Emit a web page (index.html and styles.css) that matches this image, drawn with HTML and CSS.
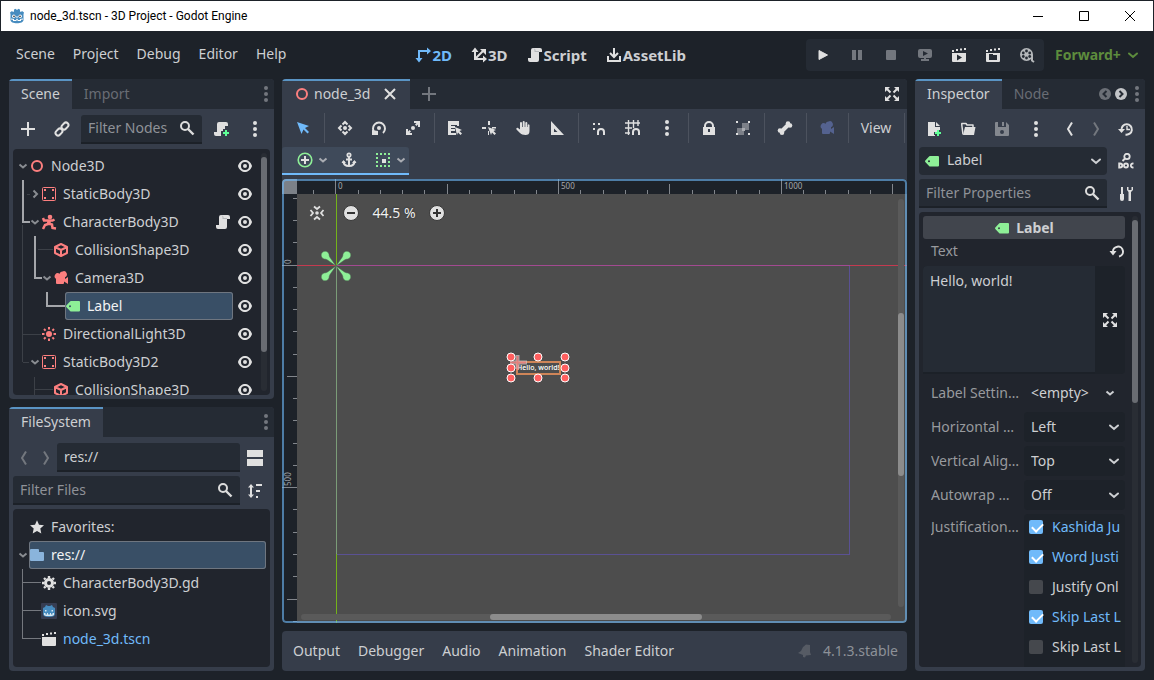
FILE: index.html
```
<!DOCTYPE html>
<html lang="en">
<head>
    <meta charset="UTF-8">
    <meta name="viewport" content="width=device-width, initial-scale=1.0">
    <title>node_3d.tscn - 3D Project - Godot Engine</title>
    <link rel="stylesheet" href="styles.css">
</head>
<body>

    <!-- Icon set, 16x16 each -->
    <svg class="icon-set" aria-hidden="true">
        <symbol id="godot" viewBox="0 0 16 16">
            <path fill="#478cbf" d="M1 4.500l2-1.500 1 1L5 3.500V1.500l2-.8.700 1.300h.6L9 .7l2 .8v2l1 .5 1-1 2 1.500-.5 1.800V12c0 2-3 3.300-6.500 3.300S1.500 14 1.500 12V6.300z"/>
            <circle cx="4.800" cy="8.200" r="1.700" fill="#fff"/><circle cx="11.200" cy="8.200" r="1.700" fill="#fff"/>
            <circle cx="5" cy="8.300" r=".9" fill="#414042"/><circle cx="11" cy="8.300" r=".9" fill="#414042"/>
            <path fill="#fff" d="M7.500 8h1v2.200h-1zM2 10.500l3 .5v1h2v-.7h2v.7h2v-1l3-.5v1l-2 .3v1.200H9v-.6H7v.6H4v-1.200l-2-.3z"/>
        </symbol>
        <symbol id="circle" viewBox="0 0 16 16"><circle cx="8" cy="8" r="5" fill="none" stroke="#fc7f7f" stroke-width="2"/></symbol>
        <symbol id="static-body" viewBox="0 0 16 16">
            <rect x="1.500" y="1.500" width="13" height="13" rx="1" fill="none" stroke="#fc7f7f"/>
            <path fill="#fc7f7f" d="M3 3h2v2H3zM11 3h2v2h-2zM3 11h2v2H3zM11 11h2v2h-2z"/>
        </symbol>
        <symbol id="character" viewBox="0 0 16 16">
            <circle cx="9" cy="3" r="2.300" fill="#fc7f7f"/>
            <path fill="none" stroke="#fc7f7f" stroke-width="2.500" d="M2 4l1 2.500h8.500l2-1M8 5.500L7 10l-3 1-2 4M7 9.500l4 1 .5 3.500 3.500.5M8.500 6v4"/>
        </symbol>
        <symbol id="cube" viewBox="0 0 16 16"><path fill="none" stroke="#fc7f7f" stroke-width="2" stroke-linejoin="round" d="M8 2l6 3v6l-6 3-6-3V5zM2 5l6 3 6-3M8 8v6"/></symbol>
        <symbol id="camera" viewBox="0 0 16 16"><path fill="currentColor" d="M9.500 1.500a3 3 0 0 0-2.900 2.200A3 3 0 1 0 3 8.800V13a1 1 0 0 0 1 1h6a1 1 0 0 0 1-1v-1.500l4 2.500V7l-3 2V7.200A3 3 0 0 0 9.500 1.500z"/></symbol>
        <symbol id="tag" viewBox="0 0 16 16"><path fill="#8eef97" fill-rule="evenodd" d="M6 3a1 1 0 0 0-.7.3l-4 4.200a1 1 0 0 0 0 1.400l4 4.300a1 1 0 0 0 .7.300h8a1 1 0 0 0 1-1V4a1 1 0 0 0-1-1zM5 7.300a1 1 0 0 1 0 2 1 1 0 0 1 0-2z"/></symbol>
        <symbol id="sun" viewBox="0 0 16 16">
            <circle cx="8" cy="8" r="3" fill="#fc7f7f"/>
            <path stroke="#fc7f7f" stroke-width="2" d="M8 1v2.500M8 12.500V15M1 8h2.500M12.500 8H15M3 3l1.600 1.600M11.400 11.400L13 13M13 3l-1.600 1.600M4.600 11.400L3 13"/>
        </symbol>
        <symbol id="eye" viewBox="0 0 16 16"><path fill="#e0e0e0" d="M8 2C5.440 2 2.210 3.950 1.050 7.700a1 1 0 0 0 0 .55C2.160 12.210 5.500 14 8 14s5.840-1.790 6.960-5.720a1 1 0 0 0 0-.55C13.860 3.940 10.560 2 8 2zm0 2a4 4 0 0 1 0 8 4 4 0 0 1 0-8zm0 2a2 2 0 0 0 0 4 2 2 0 0 0 0-4z"/></symbol>
        <symbol id="script" viewBox="0 0 16 16">
            <path fill="#e0e0e0" d="M6 1a2 2 0 0 0-2 2v8H1v2a2 2 0 0 0 2 2h7a2 2 0 0 0 2-2V5h3V3a2 2 0 0 0-2-2z"/>
            <path fill="#b4b6b9" d="M6 1.500a1.500 1.500 0 0 1 1.500 1.500v2H12V4H8.500V3c0-.8-1-1.500-2.500-1.500z"/>
        </symbol>
        <symbol id="script-add" viewBox="0 0 16 16">
            <path fill="#e0e0e0" d="M6 1a2 2 0 0 0-2 2v8H1v2a2 2 0 0 0 2 2h5v-5h2V8h2V5h3V3a2 2 0 0 0-2-2z"/>
            <path fill="#5fff97" d="M12 9h2v2h2v2h-2v2h-2v-2h-2v-2h2z"/>
        </symbol>
        <symbol id="plus" viewBox="0 0 16 16"><path fill="currentColor" d="M7 1h2v6h6v2H9v6H7V9H1V7h6z"/></symbol>
        <symbol id="link" viewBox="0 0 16 16"><g fill="none" stroke="#e0e0e0" stroke-width="2"><rect x="-3.800" y="-2.500" width="7.600" height="5" rx="2.500" transform="translate(11 5) rotate(-45)"/><rect x="-3.800" y="-2.500" width="7.600" height="5" rx="2.500" transform="translate(5 11) rotate(-45)"/></g></symbol>
        <symbol id="search" viewBox="0 0 16 16"><circle cx="6" cy="6" r="4" fill="none" stroke="#dcdcdc" stroke-width="2"/><path stroke="#dcdcdc" stroke-width="2.400" d="M9 9l5.500 5.500"/></symbol>
        <symbol id="dots" viewBox="0 0 16 16"><g fill="currentColor"><circle cx="8" cy="2" r="2"/><circle cx="8" cy="8" r="2"/><circle cx="8" cy="14" r="2"/></g></symbol>
        <symbol id="chevron" viewBox="0 0 16 16"><path fill="none" stroke="currentColor" stroke-width="2" stroke-linecap="round" d="M4 6.500l4 3.500 4-3.500"/></symbol>
        <symbol id="arrow-down" viewBox="0 0 16 16"><path fill="none" stroke="currentColor" stroke-width="2" d="M4.500 6.500L8 9.500l3.500-3"/></symbol>
        <symbol id="arrow-right" viewBox="0 0 16 16"><path fill="none" stroke="currentColor" stroke-width="2" d="M6.500 4.500L10 8l-3.500 3.500"/></symbol>
        <symbol id="back" viewBox="0 0 16 16"><path fill="none" stroke="currentColor" stroke-width="2" d="M10 1.500L6 8l4 6.500"/></symbol>
        <symbol id="forward" viewBox="0 0 16 16"><path fill="none" stroke="currentColor" stroke-width="2" d="M6 1.500l4 6.500-4 6.500"/></symbol>
        <symbol id="split" viewBox="0 0 16 16"><path fill="#e0e0e0" d="M0 0h16v7H0zM0 9h16v7H0z"/></symbol>
        <symbol id="sort" viewBox="0 0 16 16"><path fill="#e0e0e0" d="M4 1l3 3.500H5v7h2L4 15l-3-3.500h2v-7H1zM9 1h6v2H9zM9 7h4v2H9zM9 13h2v2H9z"/></symbol>
        <symbol id="star" viewBox="0 0 16 16"><path fill="#e0e0e0" d="M8 1.200l2 4.500 5 .5-3.700 3.300 1 5L8 12l-4.300 2.500 1-5L1 6.200l5-.5z"/></symbol>
        <symbol id="folder" viewBox="0 0 16 16"><path fill="#8ab4dc" d="M2 2a1 1 0 0 0-1 1v10a1 1 0 0 0 1 1h12a1 1 0 0 0 1-1V6a1 1 0 0 0-1-1h-4V3a1 1 0 0 0-1-1z"/></symbol>
        <symbol id="gear" viewBox="0 0 16 16"><circle cx="8" cy="8" r="3.500" fill="none" stroke="#e0e0e0" stroke-width="3"/><path stroke="#e0e0e0" stroke-width="2.400" d="M8 1v2M8 13v2M1 8h2M13 8h2M3 3l1.500 1.500M11.500 11.500L13 13M13 3l-1.500 1.500M4.500 11.500L3 13"/></symbol>
        <symbol id="godot-file" viewBox="0 0 16 16"><rect width="16" height="16" rx="1" fill="#363d52"/><path fill="#478cbf" d="M2 5l2-1 1-2 2 1h2l2-1 1 2 2 1v6c0 2-2 3-6 3s-6-1-6-3z"/><path fill="#d7e7f2" d="M4 7h1.500v1.500H4zM10.500 7H12v1.500h-1.500zM3 10h1.500v1.500H6V10h1v1.500h2V10h1v1.500h1.500V10H13v2l-2 1H5l-2-1z"/></symbol>
        <symbol id="clapper" viewBox="0 0 16 16"><path fill="#e0e0e0" d="M1 3h2v2H1zM5 2h2v2H5zM9 1.500h2v2H9zM13 1h2v2h-2zM1 6h14v8a1 1 0 0 1-1 1H2a1 1 0 0 1-1-1z"/></symbol>
        <symbol id="play-scene" viewBox="0 0 16 16"><path fill="#e0e0e0" fill-rule="evenodd" d="M1 3h2v2H1zM5 2h2v2H5zM9 1.500h2v2H9zM13 1h2v2h-2zM1 6h14v8a1 1 0 0 1-1 1H2a1 1 0 0 1-1-1zM6 7.500v6l5-3z"/></symbol>
        <symbol id="play-custom" viewBox="0 0 16 16"><path fill="#e0e0e0" fill-rule="evenodd" d="M1 3h2v2H1zM5 2h2v2H5zM9 1.500h2v2H9zM13 1h2v2h-2zM1 6h14v8a1 1 0 0 1-1 1H2a1 1 0 0 1-1-1zM4 7v6h8V8H8V7z"/></symbol>
        <symbol id="mode-2d" viewBox="0 0 16 16"><path fill="none" stroke="#70bafa" stroke-width="2" d="M4 13V4h9"/><path fill="#70bafa" d="M12 .5L16 4l-4 3.500zM.5 11L4 15.500 7.500 11z"/></symbol>
        <symbol id="mode-3d" viewBox="0 0 16 16"><path fill="none" stroke="#e0e0e0" stroke-width="2" d="M4 3v9h9M4 12l8-8"/><path fill="#e0e0e0" d="M.5 5L4 .5 7.500 5zM12 8.500l4 3.500-4 3.500zM9 2h6v6z"/></symbol>
        <symbol id="assetlib" viewBox="0 0 16 16"><path fill="none" stroke="#e0e0e0" stroke-width="2" d="M8 1v8M4 6l4 4 4-4M2 9v5h12V9"/></symbol>
        <symbol id="play" viewBox="0 0 16 16"><path fill="#e0e0e0" d="M4 3.500v9l8.500-4.500z" stroke="#e0e0e0" stroke-linejoin="round"/></symbol>
        <symbol id="pause" viewBox="0 0 16 16"><path fill="currentColor" d="M3 3h4v10H3zM9 3h4v10H9z"/></symbol>
        <symbol id="stop" viewBox="0 0 16 16"><rect x="3" y="3" width="10" height="10" rx="1" fill="currentColor"/></symbol>
        <symbol id="remote" viewBox="0 0 16 16"><path fill="currentColor" fill-rule="evenodd" d="M3 2a2 2 0 0 0-2 2v5a2 2 0 0 0 2 2h4v1H4v2h8v-2H9v-1h4a2 2 0 0 0 2-2V4a2 2 0 0 0-2-2zM6 4l5 2.500L6 9z"/></symbol>
        <symbol id="movie" viewBox="0 0 16 16"><circle cx="7.500" cy="7.500" r="6.500" fill="#b5b8bb"/><path stroke="#b5b8bb" stroke-width="2" d="M13 8v5.500l2 1.500"/><g fill="#252b34"><circle cx="7.500" cy="4" r="1.400"/><circle cx="7.500" cy="11" r="1.400"/><circle cx="4.300" cy="6" r="1.400"/><circle cx="10.700" cy="6" r="1.400"/><circle cx="4.300" cy="9.500" r="1.400"/><circle cx="10.700" cy="9.500" r="1.400"/></g></symbol>
        <symbol id="close" viewBox="0 0 16 16"><path stroke="#e0e0e0" stroke-width="2" d="M3 3l10 10M13 3L3 13"/></symbol>
        <symbol id="expand" viewBox="0 0 16 16"><path stroke="#e0e0e0" stroke-width="2" d="M3 3l3.500 3.500M13 3L9.500 6.500M3 13l3.500-3.500M13 13L9.500 9.500"/><path fill="#e0e0e0" d="M1 1h5L1 6zM15 1v5l-5-5zM1 15v-5l5 5zM15 15h-5l5-5z"/></symbol>
        <symbol id="cursor" viewBox="0 0 16 16"><path fill="#70bafa" d="M2 2l4.500 12 2-4.500 4 4 1.500-1.500-4-4L14 6z"/></symbol>
        <symbol id="move" viewBox="0 0 16 16"><circle cx="8" cy="8" r="2" fill="#e0e0e0"/><path fill="none" stroke="#e0e0e0" stroke-width="2" d="M5.500 4.500L8 2l2.500 2.500M5.500 11.500L8 14l2.500-2.500M4.500 5.500L2 8l2.500 2.500M11.500 5.500L14 8l-2.500 2.500"/></symbol>
        <symbol id="rotate" viewBox="0 0 16 16"><path fill="none" stroke="#e0e0e0" stroke-width="2" d="M4 13a6 6 0 1 1 8 0"/><circle cx="8" cy="8" r="2" fill="#e0e0e0"/><path fill="#e0e0e0" d="M1 10l6 1v4H1z"/></symbol>
        <symbol id="scale" viewBox="0 0 16 16"><circle cx="8" cy="8" r="2" fill="#e0e0e0"/><path fill="#e0e0e0" d="M9 1h6v6h-2V4.500L11.500 6 10 4.500 11.500 3H9zM7 15H1V9h2v2.500L4.500 10 6 11.500 4.500 13H7z"/></symbol>
        <symbol id="list-select" viewBox="0 0 16 16"><path fill="#e0e0e0" d="M1 1h11v5h-2V5H4v1h4v2H4v1h4v2H4v2h5v2H1zM8 7l7 3-2.500 1L15 13.500 13.500 15 11 12.500 10 15z"/></symbol>
        <symbol id="pivot" viewBox="0 0 16 16"><path fill="#e0e0e0" d="M7 1h2v4H7zM1 7h4v2H1zM11 7h4v1.500h-4zM7 11h1v4H7zM7 7l8 3-2.500 1L15 13.500 13.500 15 11 12.500 10 15z"/></symbol>
        <symbol id="hand" viewBox="0 0 16 16"><path fill="#e0e0e0" d="M5 3a1 1 0 0 1 2 0v4h.7V2a1 1 0 0 1 2 0v5h.6V3a1 1 0 0 1 2 0v4h.5V5a1 1 0 0 1 1.700 0v6c0 3-1.500 4-4 4S6 14 5 13L1.500 9.500C.8 8.500 2 7.500 3 8l2 1.500z"/></symbol>
        <symbol id="ruler" viewBox="0 0 16 16"><path fill="#e0e0e0" fill-rule="evenodd" d="M2 1l13 14H2zM5 8.500V12h3.500z"/></symbol>
        <symbol id="snap" viewBox="0 0 16 16"><path fill="none" stroke="#e0e0e0" stroke-width="2" d="M7 15v-3a3 3 0 0 1 6 0v3"/><path fill="#e0e0e0" d="M2 3h2v2H2zM7 3h2v2H7zM2 8h2v2H2z"/></symbol>
        <symbol id="grid-snap" viewBox="0 0 16 16"><path fill="none" stroke="#e0e0e0" stroke-width="1.400" d="M3.500 0v15M8.500 0v8M13 0v6M0 3h15M0 8h7M0 13h5"/><path fill="none" stroke="#e0e0e0" stroke-width="2" d="M8 15v-3a3 3 0 0 1 6 0v3"/></symbol>
        <symbol id="lock" viewBox="0 0 16 16"><path fill="none" stroke="#e0e0e0" stroke-width="2" d="M4 8V6a4 4 0 0 1 8 0v2"/><path fill="#e0e0e0" fill-rule="evenodd" d="M2 7h12v8H2zM7 9v3h2V9z"/></symbol>
        <symbol id="group" viewBox="0 0 16 16"><path fill="#7c8088" d="M7 3h7v7H9v5H2V8h5z"/><path fill="#a9abb0" d="M7 8h3v3H7z"/><path fill="#e0e0e0" d="M1 1h2v2H1zM13 1h2v2h-2zM1 13h2v2H1zM13 13h2v2h-2z"/></symbol>
        <symbol id="bone" viewBox="0 0 16 16"><path stroke="#e0e0e0" stroke-width="4" d="M4 12l8-8"/><g fill="#e0e0e0"><circle cx="11" cy="3.500" r="2.300"/><circle cx="13" cy="5.500" r="2.300"/><circle cx="3" cy="10.500" r="2.300"/><circle cx="5" cy="12.800" r="2.300"/></g></symbol>
        <symbol id="container-add" viewBox="0 0 16 16"><circle cx="8" cy="8" r="6.800" fill="none" stroke="#8eef97" stroke-width="1.600"/><path fill="#e0e0e0" d="M7 4h2v3h3v2H9v3H7V9H4V7h3z"/></symbol>
        <symbol id="anchor" viewBox="0 0 16 16"><path fill="none" stroke="#e0e0e0" stroke-width="2" d="M8 5v9M5 7.500h6M2.500 9c0 3 2 5 5.500 5s5.500-2 5.500-5"/><circle cx="8" cy="3" r="1.700" fill="none" stroke="#e0e0e0" stroke-width="1.700"/><path fill="#e0e0e0" d="M.5 11l2-3 2.500 3zM11 11l2.500-3 2 3z"/></symbol>
        <symbol id="layout" viewBox="0 0 16 16"><path fill="none" stroke="#8eef97" stroke-width="2" stroke-dasharray="2 2" d="M1 2h14M1 14h14M2 1v14M14 1v14"/><path fill="#e0e0e0" d="M7 7h4v4H7z"/></symbol>
        <symbol id="center-view" viewBox="0 0 16 16"><g fill="none" stroke="#e0e0e0" stroke-width="1.800"><path d="M5 1.500l3 2.500 3-2.500M5 14.500L8 12l3 2.500M1.500 5L4 8l-2.500 3M14.500 5L12 8l2.500 3"/></g><circle cx="8" cy="8" r="1.800" fill="#e0e0e0"/></symbol>
        <symbol id="zoom-less" viewBox="0 0 16 16"><circle cx="8" cy="8" r="7.500" fill="#e0e0e0" stroke="#383838"/><path fill="#333" d="M4 7h8v2H4z"/></symbol>
        <symbol id="zoom-more" viewBox="0 0 16 16"><circle cx="8" cy="8" r="7.500" fill="#e0e0e0" stroke="#383838"/><path fill="#333" d="M7 4h2v3h3v2H9v3H7V9H4V7h3z"/></symbol>
        <symbol id="bell" viewBox="0 0 16 16"><path fill="#565b64" d="M9 1.500l4 .5v7l1 3-5 .5-1 2-2-.5v-2L1 10l3-2 2-4z"/></symbol>
        <symbol id="prev-round" viewBox="0 0 16 16"><circle cx="8" cy="8" r="6" fill="#6b6f76"/><path fill="none" stroke="#252b34" stroke-width="2" d="M9.500 5l-3 3 3 3"/></symbol>
        <symbol id="next-round" viewBox="0 0 16 16"><circle cx="8" cy="8" r="6" fill="#c3c5c8"/><path fill="none" stroke="#252b34" stroke-width="2" d="M6.500 5l3 3-3 3"/></symbol>
        <symbol id="file-add" viewBox="0 0 16 16"><path fill="#e0e0e0" d="M2 1h7v5h5v3h-3v2H8v3h1v1H2zM10 1l4 4h-4z"/><path fill="#5fff97" d="M11 9h2v2h2v2h-2v2h-2v-2H9v-2h2z"/></symbol>
        <symbol id="open" viewBox="0 0 16 16"><path fill="none" stroke="#e0e0e0" stroke-width="1.500" stroke-linejoin="round" d="M3 13.500L1.800 4V2.500H6l1 1.500h6v2"/><path fill="#e0e0e0" d="M5 6h10.500L14 14H3z"/></symbol>
        <symbol id="save" viewBox="0 0 16 16"><path fill="#84888f" fill-rule="evenodd" d="M2 1h10l3 3v10a1 1 0 0 1-1 1H2a1 1 0 0 1-1-1V2a1 1 0 0 1 1-1zM4 1v5h8V1h-2v4H8V1zM8 9a2 2 0 0 0 0 4 2 2 0 0 0 0-4z"/></symbol>
        <symbol id="history" viewBox="0 0 16 16"><path fill="none" stroke="#e0e0e0" stroke-width="2" d="M3.500 9a5.200 5.200 0 1 1 4 4.500"/><path fill="none" stroke="#e0e0e0" stroke-width="1.400" d="M9 5v3.500h3"/><path fill="#e0e0e0" d="M0 8h7l-3.500 4z"/></symbol>
        <symbol id="undo" viewBox="0 0 16 16"><path fill="none" stroke="#e0e0e0" stroke-width="2" d="M4 9a5 5 0 1 1 6 4.500"/><path fill="#e0e0e0" d="M.5 8h7L4 12.500z"/></symbol>
        <symbol id="doc" viewBox="0 0 16 16"><circle cx="9" cy="3.500" r="2.700" fill="none" stroke="#e0e0e0" stroke-width="1.800"/><g fill="none" stroke="#e0e0e0" stroke-width="1.900"><path d="M7 5.500L4.500 8M1.200 10.500v4H2c3 0 3-4 0-4z"/><circle cx="8" cy="12.500" r="2"/><path d="M15.500 10.600c-3.500-.6-3.500 4.400 0 3.800"/></g></symbol>
        <symbol id="tools" viewBox="0 0 16 16"><path fill="#e0e0e0" d="M3 1h2v7h1v5a2 2 0 0 1-4 0V8h1zM9 1v3l1.500 2v9h2.500V6l2-2V1h-1.500v3h-3V1z"/></symbol>
    </svg>

    <header class="titlebar">
        <svg class="icon"><use href="#godot"/></svg>
        <h1>node_3d.tscn - 3D Project - Godot Engine</h1>
        <div class="window-controls">
            <button aria-label="Minimize"><svg viewBox="0 0 10 10"><path d="M0 5.500h10"/></svg></button>
            <button aria-label="Maximize"><svg viewBox="0 0 10 10"><path d="M.5.500h9v9h-9z"/></svg></button>
            <button aria-label="Close"><svg viewBox="0 0 10 10"><path d="M0 0l10 10M10 0L0 10"/></svg></button>
        </div>
    </header>

    <nav class="menubar">
        <div class="menus">
            <button>Scene</button>
            <button>Project</button>
            <button>Debug</button>
            <button>Editor</button>
            <button>Help</button>
        </div>
        <div class="modes">
            <button class="active"><svg class="icon"><use href="#mode-2d"/></svg>2D</button>
            <button><svg class="icon"><use href="#mode-3d"/></svg>3D</button>
            <button><svg class="icon"><use href="#script"/></svg>Script</button>
            <button><svg class="icon"><use href="#assetlib"/></svg>AssetLib</button>
        </div>
        <div class="run-bar">
            <button aria-label="Play"><svg class="icon"><use href="#play"/></svg></button>
            <button class="dim" aria-label="Pause"><svg class="icon"><use href="#pause"/></svg></button>
            <button class="dim" aria-label="Stop"><svg class="icon"><use href="#stop"/></svg></button>
            <button class="dim" aria-label="Remote debug"><svg class="icon"><use href="#remote"/></svg></button>
            <button aria-label="Play scene"><svg class="icon"><use href="#play-scene"/></svg></button>
            <button aria-label="Play custom scene"><svg class="icon"><use href="#play-custom"/></svg></button>
            <button aria-label="Movie maker"><svg class="icon"><use href="#movie"/></svg></button>
        </div>
        <div class="dropdown renderer">
            <select aria-label="Renderer"><option>Forward+</option></select>
            <svg class="icon caret"><use href="#chevron"/></svg>
        </div>
    </nav>

    <main class="docks">

        <!-- Left side: scene tree and files -->
        <div class="column left">
            <section class="dock scene-dock">
                <div class="tabs">
                    <button class="tab active">Scene</button>
                    <button class="tab">Import</button>
                    <button class="tab-menu" aria-label="Dock options"><svg class="icon"><use href="#dots"/></svg></button>
                </div>
                <div class="toolbar scene-toolbar">
                    <button aria-label="Add node"><svg class="icon"><use href="#plus"/></svg></button>
                    <button aria-label="Instance scene"><svg class="icon"><use href="#link"/></svg></button>
                    <div class="field">
                        <input type="text" placeholder="Filter Nodes" aria-label="Filter Nodes">
                        <svg class="icon"><use href="#search"/></svg>
                    </div>
                    <button aria-label="Attach script"><svg class="icon"><use href="#script-add"/></svg></button>
                    <button aria-label="More"><svg class="icon"><use href="#dots"/></svg></button>
                </div>
                <div class="tree scene-tree">
                    <svg class="guides" aria-hidden="true">
                        <path class="faint" d="M9.500 76v137M14 45.500h3M10 185.500h18M10 213.500h6M21.500 228v20M22 240.500h18M25 100.500h15"/>
                        <path class="strong" d="M10 31v42h7M22 87v42h7M34 143v14h18"/>
                    </svg>
                    <div class="row"><svg class="icon fold"><use href="#arrow-down"/></svg><svg class="icon"><use href="#circle"/></svg><span>Node3D</span><svg class="icon"><use href="#eye"/></svg></div>
                    <div class="row level-1"><svg class="icon fold"><use href="#arrow-right"/></svg><svg class="icon"><use href="#static-body"/></svg><span>StaticBody3D</span><svg class="icon"><use href="#eye"/></svg></div>
                    <div class="row level-1"><svg class="icon fold"><use href="#arrow-down"/></svg><svg class="icon"><use href="#character"/></svg><span>CharacterBody3D</span><svg class="icon"><use href="#script"/></svg><svg class="icon"><use href="#eye"/></svg></div>
                    <div class="row level-2"><i class="fold"></i><svg class="icon"><use href="#cube"/></svg><span>CollisionShape3D</span><svg class="icon"><use href="#eye"/></svg></div>
                    <div class="row level-2"><svg class="icon fold"><use href="#arrow-down"/></svg><svg class="icon red"><use href="#camera"/></svg><span>Camera3D</span><svg class="icon"><use href="#eye"/></svg></div>
                    <div class="row level-3"><i class="fold"></i><div class="selected"><svg class="icon"><use href="#tag"/></svg><span>Label</span></div><svg class="icon"><use href="#eye"/></svg></div>
                    <div class="row level-1"><i class="fold"></i><svg class="icon"><use href="#sun"/></svg><span>DirectionalLight3D</span><svg class="icon"><use href="#eye"/></svg></div>
                    <div class="row level-1"><svg class="icon fold"><use href="#arrow-down"/></svg><svg class="icon"><use href="#static-body"/></svg><span>StaticBody3D2</span><svg class="icon"><use href="#eye"/></svg></div>
                    <div class="row level-2"><i class="fold"></i><svg class="icon"><use href="#cube"/></svg><span>CollisionShape3D</span><svg class="icon"><use href="#eye"/></svg></div>
                    <div class="scroll"><i></i></div>
                </div>
            </section>

            <section class="dock file-dock">
                <div class="tabs">
                    <button class="tab active">FileSystem</button>
                    <button class="tab-menu" aria-label="Dock options"><svg class="icon"><use href="#dots"/></svg></button>
                </div>
                <div class="file-bar">
                    <button class="dim" aria-label="Previous folder"><svg class="icon"><use href="#back"/></svg></button>
                    <button class="dim" aria-label="Next folder"><svg class="icon"><use href="#forward"/></svg></button>
                    <div class="field"><input type="text" value="res://" aria-label="Path"></div>
                    <button class="side" aria-label="Split mode"><svg class="icon"><use href="#split"/></svg></button>
                </div>
                <div class="file-bar">
                    <div class="field">
                        <input type="text" placeholder="Filter Files" aria-label="Filter Files">
                        <svg class="icon"><use href="#search"/></svg>
                    </div>
                    <button class="side" aria-label="Sort files"><svg class="icon"><use href="#sort"/></svg></button>
                </div>
                <div class="tree file-tree">
                    <svg class="guides" aria-hidden="true"><path class="mid" d="M9.500 60v70M10 73.500h18M10 101.500h18M10 129.500h18"/></svg>
                    <div class="row"><i class="fold"></i><svg class="icon"><use href="#star"/></svg><span>Favorites:</span></div>
                    <div class="row"><svg class="icon fold"><use href="#arrow-down"/></svg><div class="selected"><svg class="icon"><use href="#folder"/></svg><span>res://</span></div></div>
                    <div class="row level-1"><i class="fold"></i><svg class="icon"><use href="#gear"/></svg><span>CharacterBody3D.gd</span></div>
                    <div class="row level-1"><i class="fold"></i><svg class="icon"><use href="#godot-file"/></svg><span>icon.svg</span></div>
                    <div class="row level-1"><i class="fold"></i><svg class="icon"><use href="#clapper"/></svg><span class="accent">node_3d.tscn</span></div>
                </div>
            </section>
        </div>

        <!-- 2D editor -->
        <div class="column center">
            <section class="dock workspace">
                <div class="tabs">
                    <button class="tab active scene-tab"><svg class="icon"><use href="#circle"/></svg>node_3d<svg class="icon"><use href="#close"/></svg></button>
                    <button class="new-tab" aria-label="New scene"><svg class="icon"><use href="#plus"/></svg></button>
                    <button class="tab-menu wide" aria-label="Distraction free mode"><svg class="icon"><use href="#expand"/></svg></button>
                </div>
                <div class="toolbar canvas-toolbar">
                    <button aria-label="Select"><svg class="icon"><use href="#cursor"/></svg></button>
                    <i class="sep"></i>
                    <button aria-label="Move"><svg class="icon"><use href="#move"/></svg></button>
                    <button aria-label="Rotate"><svg class="icon"><use href="#rotate"/></svg></button>
                    <button aria-label="Scale"><svg class="icon"><use href="#scale"/></svg></button>
                    <i class="sep"></i>
                    <button aria-label="List select"><svg class="icon"><use href="#list-select"/></svg></button>
                    <button aria-label="Pivot"><svg class="icon"><use href="#pivot"/></svg></button>
                    <button aria-label="Pan"><svg class="icon"><use href="#hand"/></svg></button>
                    <button aria-label="Ruler"><svg class="icon"><use href="#ruler"/></svg></button>
                    <i class="sep"></i>
                    <button aria-label="Smart snap"><svg class="icon"><use href="#snap"/></svg></button>
                    <button aria-label="Grid snap"><svg class="icon"><use href="#grid-snap"/></svg></button>
                    <button aria-label="Snap options"><svg class="icon"><use href="#dots"/></svg></button>
                    <i class="sep"></i>
                    <button aria-label="Lock"><svg class="icon"><use href="#lock"/></svg></button>
                    <button aria-label="Group"><svg class="icon"><use href="#group"/></svg></button>
                    <i class="sep"></i>
                    <button aria-label="Skeleton"><svg class="icon"><use href="#bone"/></svg></button>
                    <i class="sep"></i>
                    <button class="override" aria-label="Override camera"><svg class="icon"><use href="#camera"/></svg></button>
                    <i class="sep"></i>
                    <button class="view">View</button>
                    <i class="sep"></i>
                </div>
                <div class="context-bar">
                    <button aria-label="Container sizing"><svg class="icon"><use href="#container-add"/></svg><svg class="icon"><use href="#arrow-down"/></svg></button>
                    <button aria-label="Anchor mode"><svg class="icon"><use href="#anchor"/></svg></button>
                    <button aria-label="Anchor presets"><svg class="icon"><use href="#layout"/></svg><svg class="icon"><use href="#arrow-down"/></svg></button>
                </div>
                <div class="viewport">
                    <svg class="canvas">
                        <rect class="frame" x="54.500" y="86.500" width="513" height="289"/>
                        <path class="axis-y" d="M54.500 15v800"/>
                        <path class="axis-y inside" d="M54.500 87v288"/>
                        <path class="axis-x" d="M15 86.500h1600"/>
                        <path class="axis-x inside" d="M55 86.500h513"/>

                        <!-- Anchor handles -->
                        <g class="anchors" transform="translate(54 87)">
                            <path id="pin" d="M0 0L-6-8.500Q-7-10-7-12A4 4 0 1 0-12-7Q-10-7-8.500-6z"/>
                            <use href="#pin" transform="rotate(90)"/>
                            <use href="#pin" transform="rotate(180)"/>
                            <use href="#pin" transform="rotate(270)"/>
                        </g>

                        <!-- Selected label -->
                        <rect class="selection" x="235" y="183" width="43" height="12"/>
                        <text class="label-text" x="235" y="191">Hello, world!</text>
                        <path class="cross" d="M228 183.500h17M235.500 176v14"/>
                        <path class="cross inner" d="M228 183.500h16M235.500 177v14"/>
                        <g class="handles">
                            <circle cx="229" cy="178" r="4"/><circle cx="256" cy="178" r="4"/><circle cx="283" cy="178" r="4"/>
                            <circle cx="229" cy="189" r="4"/><circle cx="283" cy="189" r="4"/>
                            <circle cx="229" cy="199" r="4"/><circle cx="256" cy="199" r="4"/><circle cx="283" cy="199" r="4"/>
                        </g>

                        <!-- Rulers -->
                        <rect class="ruler" width="100%" height="15"/>
                        <rect class="ruler" width="15" height="100%"/>
                        <path class="ticks" d="M31.500 11v4M76.500 11v4M98.500 11v4M120.500 11v4M142.500 11v4M187.500 11v4M209.500 11v4M232.500 11v4M254.500 11v4M298.500 11v4M321.500 11v4M343.500 11v4M365.500 11v4M410.500 11v4M432.500 11v4M454.500 11v4M477.500 11v4M521.500 11v4M543.500 11v4M566.500 11v4M588.500 11v4M165.500 5v10M387.500 5v10M610.500 5v10M53.500 0v15M276.500 0v15M499.500 0v15"/>
                        <path class="ticks" d="M11 19.500h4M11 41.500h4M11 63.500h4M11 108.500h4M11 130.500h4M11 152.500h4M11 175.500h4M11 219.500h4M11 241.500h4M11 264.500h4M11 286.500h4M11 330.500h4M11 353.500h4M11 375.500h4M11 397.500h4M11 442.500h4M5 197.500h10M5 420.500h10M0 86.500h15M0 308.500h15"/>
                        <rect class="corner" width="15" height="15"/>
                        <g class="numbers">
                            <text x="56" y="10">0</text><text x="279" y="10">500</text><text x="502" y="10">1000</text>
                            <text transform="translate(9 85) rotate(-90)">0</text>
                            <text transform="translate(9 307) rotate(-90)">500</text>
                        </g>
                    </svg>
                    <div class="zoom">
                        <button aria-label="Center view"><svg class="icon"><use href="#center-view"/></svg></button>
                        <button aria-label="Zoom out"><svg class="icon"><use href="#zoom-less"/></svg></button>
                        <button class="zoom-value">44.5 %</button>
                        <button aria-label="Zoom in"><svg class="icon"><use href="#zoom-more"/></svg></button>
                    </div>
                    <div class="v-scroll"><i></i></div>
                    <div class="h-scroll"><i></i></div>
                </div>
            </section>

            <footer class="bottom-panel">
                <button>Output</button>
                <button>Debugger</button>
                <button>Audio</button>
                <button>Animation</button>
                <button>Shader Editor</button>
                <div class="version"><svg class="icon"><use href="#bell"/></svg><span>4.1.3.stable</span></div>
            </footer>
        </div>

        <!-- Inspector -->
        <div class="column right">
            <section class="dock inspector">
                <div class="tabs">
                    <button class="tab active">Inspector</button>
                    <button class="tab">Node</button>
                    <div class="tab-nav">
                        <button aria-label="Previous tab"><svg class="icon"><use href="#prev-round"/></svg></button>
                        <button aria-label="Next tab"><svg class="icon"><use href="#next-round"/></svg></button>
                        <button aria-label="Dock options"><svg class="icon"><use href="#dots"/></svg></button>
                    </div>
                </div>
                <div class="toolbar inspector-toolbar">
                    <button aria-label="New resource"><svg class="icon"><use href="#file-add"/></svg></button>
                    <button aria-label="Load resource"><svg class="icon"><use href="#open"/></svg></button>
                    <button aria-label="Save resource"><svg class="icon"><use href="#save"/></svg></button>
                    <button aria-label="Resource options"><svg class="icon"><use href="#dots"/></svg></button>
                    <button aria-label="Back"><svg class="icon"><use href="#back"/></svg></button>
                    <button class="dim narrow" aria-label="Forward"><svg class="icon"><use href="#forward"/></svg></button>
                    <button aria-label="History"><svg class="icon"><use href="#history"/></svg></button>
                </div>
                <div class="inspector-bar">
                    <div class="dropdown object">
                        <svg class="icon kind"><use href="#tag"/></svg>
                        <select aria-label="Edited object"><option>Label</option></select>
                        <svg class="icon caret"><use href="#chevron"/></svg>
                    </div>
                    <button aria-label="Open documentation"><svg class="icon"><use href="#doc"/></svg></button>
                </div>
                <div class="inspector-bar">
                    <div class="field">
                        <input type="text" placeholder="Filter Properties" aria-label="Filter Properties">
                        <svg class="icon"><use href="#search"/></svg>
                    </div>
                    <button aria-label="Property tools"><svg class="icon"><use href="#tools"/></svg></button>
                </div>
                <div class="properties">
                    <h2><svg class="icon"><use href="#tag"/></svg>Label</h2>
                    <div class="text-head">
                        <label for="text">Text</label>
                        <button aria-label="Revert"><svg class="icon"><use href="#undo"/></svg></button>
                    </div>
                    <div class="text-edit">
                        <textarea id="text">Hello, world!</textarea>
                        <button aria-label="Expand editor"><svg class="icon"><use href="#expand"/></svg></button>
                    </div>
                    <div class="prop plain">
                        <label for="settings">Label Settings</label>
                        <div class="dropdown"><select id="settings"><option>&lt;empty&gt;</option></select><svg class="icon caret"><use href="#arrow-down"/></svg></div>
                    </div>
                    <div class="prop">
                        <label for="horizontal">Horizontal Alignment</label>
                        <div class="dropdown"><select id="horizontal"><option>Left</option></select><svg class="icon caret"><use href="#chevron"/></svg></div>
                    </div>
                    <div class="prop">
                        <label for="vertical">Vertical Alignment</label>
                        <div class="dropdown"><select id="vertical"><option>Top</option></select><svg class="icon caret"><use href="#chevron"/></svg></div>
                    </div>
                    <div class="prop">
                        <label for="autowrap">Autowrap Mode</label>
                        <div class="dropdown"><select id="autowrap"><option>Off</option></select><svg class="icon caret"><use href="#chevron"/></svg></div>
                    </div>
                    <div class="prop flags">
                        <span class="prop-name">Justification Flags</span>
                        <div class="checks">
                            <label><input type="checkbox" checked><span>Kashida Ju</span></label>
                            <label><input type="checkbox" checked><span>Word Justi</span></label>
                            <label><input type="checkbox"><span>Justify Onl</span></label>
                            <label><input type="checkbox" checked><span>Skip Last L</span></label>
                            <label><input type="checkbox"><span>Skip Last L</span></label>
                        </div>
                    </div>
                    <div class="scroll"><i></i></div>
                </div>
            </section>
        </div>
    </main>

</body>
</html>
```
FILE: styles.css
```
* {
    box-sizing: border-box;
}

body {
    margin: 0;
    height: 100vh;
    display: flex;
    flex-direction: column;
    overflow: hidden;
    padding: 1px;
    background-color: #1d2229;
    color: #cdcfd2;
    font-family: "Noto Sans", sans-serif;
    font-size: 14px;
    line-height: 20px;
}

button, input, select, textarea {
    font: inherit;
    color: inherit;
    background: none;
    border: none;
    border-radius: 0;
    padding: 0;
    margin: 0;
    outline: none;
    appearance: none;
}

button {
    display: flex;
    align-items: center;
    justify-content: center;
    flex-shrink: 0;
    white-space: nowrap;
}

.icon-set {
    display: none;
}

.icon {
    width: 16px;
    height: 16px;
    flex-shrink: 0;
}

/* Window title */
.titlebar {
    display: flex;
    align-items: center;
    height: 30px;
    flex-shrink: 0;
    padding-left: 8px;
    background-color: #fff;
    color: #000;
}

.titlebar h1 {
    margin: 0 auto 0 5px;
    font-family: Roboto, sans-serif;
    font-size: 12px;
    font-weight: 400;
}

.window-controls {
    display: flex;
}

.window-controls button {
    width: 46px;
    height: 30px;
}

.window-controls svg {
    width: 10px;
    height: 10px;
    fill: none;
    stroke: #000;
}

/* Main menu */
.menubar {
    display: flex;
    align-items: center;
    height: 48px;
    flex-shrink: 0;
    padding: 0 9px 0 6px;
}

.menus {
    display: flex;
}

.menus button {
    padding: 0 9px 2px;
}

.modes {
    display: flex;
    gap: 19px;
    margin: 0 auto;
    font-size: 15px;
    font-weight: 700;
}

.modes button {
    gap: 1px;
}

.modes .active {
    color: #70bafa;
}

.run-bar {
    display: flex;
    height: 32px;
    border-radius: 4px;
    background-color: #252b34;
}

.run-bar button {
    width: 34px;
}

.dim {
    color: #73777e;
}

.dropdown {
    position: relative;
    display: flex;
}

.dropdown select {
    width: 100%;
    min-width: 0;
}

.caret {
    position: absolute;
    right: 3px;
    top: 50%;
    margin-top: -8px;
    pointer-events: none;
}

.renderer {
    width: 100px;
    padding-left: 11px;
    color: #5d8c3d;
    font-weight: 700;
}

/* Docks */
.docks {
    flex: 1;
    min-height: 0;
    display: flex;
    gap: 8px;
    padding: 0 8px 8px;
}

.column {
    display: flex;
    flex-direction: column;
    gap: 8px;
    min-width: 0;
}

.left {
    width: 265px;
}

.center {
    flex: 1;
}

.right {
    width: 230px;
}

.dock {
    display: flex;
    flex-direction: column;
    min-height: 0;
    border-radius: 4px;
    background-color: #363d4a;
    overflow: hidden;
}

.scene-dock {
    flex: 320;
}

.file-dock {
    flex: 264;
}

.tabs {
    display: flex;
    height: 30px;
    flex-shrink: 0;
    background-color: #252b34;
}

.tab {
    padding: 0 12px;
    color: #696d74;
}

.tab.active {
    border-top: 2px solid #5a94c4;
    padding-bottom: 2px;
    background-color: #363d4a;
    color: #cdcfd2;
}

.tab-menu {
    width: 16px;
    margin-left: auto;
    color: #73777e;
}

.tab-menu.wide {
    width: 30px;
}

.scene-tab {
    gap: 4px;
}

.scene-tab .icon:last-child {
    margin-left: 8px;
}

.new-tab {
    width: 38px;
    color: #73777e;
}

.tab-nav {
    display: flex;
    margin-left: auto;
    color: #73777e;
}

.toolbar {
    display: flex;
    align-items: center;
    height: 40px;
    flex-shrink: 0;
    color: #e0e0e0;
}

.toolbar button {
    width: 34px;
    height: 28px;
}

.field {
    display: flex;
    align-items: center;
    flex: 1;
    min-width: 0;
    height: 29px;
    padding: 0 7px;
    border-bottom: 2px solid #1c2128;
    border-radius: 3px 3px 0 0;
    background-color: #252b34;
}

.field input {
    flex: 1;
    min-width: 0;
    width: 0;
}

.field input::placeholder {
    color: #8f9298;
    opacity: 1;
}

.scene-toolbar {
    padding: 0 2px;
}

.scene-toolbar .field {
    margin: 0 2px;
}

/* Trees */
.tree {
    position: relative;
    flex: 1;
    min-height: 0;
    margin: 0 4px 4px;
    border-radius: 4px;
    background-color: #21252d;
    overflow: hidden;
}

.scene-tree {
    padding: 3px 17px 0 0;
}

.file-tree {
    padding: 4px 4px 0 0;
}

.guides {
    position: absolute;
    left: 0;
    top: 0;
    width: 100%;
    height: 100%;
    fill: none;
}

.guides .faint {
    stroke: #3c4047;
}

.guides .mid {
    stroke: #75787e;
}

.guides .strong {
    stroke: #a4a6aa;
    stroke-width: 2px;
}

.row {
    position: relative;
    display: flex;
    align-items: center;
    gap: 6px;
    height: 28px;
    padding-left: 2px;
}

.row span {
    flex: 1;
    white-space: nowrap;
}

.level-1 {
    padding-left: 14px;
}

.level-2 {
    padding-left: 26px;
}

.level-3 {
    padding-left: 38px;
}

.level-3 .selected {
    margin-right: -2px;
}

.fold {
    width: 16px;
    flex-shrink: 0;
    margin-right: -8px;
    color: #898c91;
}

.red {
    color: #fc7f7f;
}

.selected {
    display: flex;
    align-items: center;
    gap: 6px;
    flex: 1;
    height: 28px;
    border-radius: 3px;
    background-color: #394f66;
    box-shadow: inset 0 0 0 1px #6f7680;
    color: #f2f3f4;
}

.accent {
    color: #70bafa;
}

.scroll {
    position: absolute;
    right: 3px;
    top: 4px;
    bottom: 4px;
    width: 6px;
    border-radius: 3px;
    background-color: #292d34;
}

.scroll i {
    display: block;
    margin-top: 4px;
    height: 82%;
    border-radius: 3px;
    background-color: #696c72;
}

/* File system */
.file-bar {
    display: flex;
    align-items: center;
    margin: 0 4px 4px;
}

.tabs + .file-bar {
    margin-top: 6px;
}

.file-bar .dim {
    width: 22px;
}

.side {
    width: 30px;
    height: 28px;
}

/* 2D editor */
.workspace {
    flex: 1;
}

.canvas-toolbar {
    height: 38px;
    padding-left: 4px;
}

.sep {
    width: 1px;
    height: 30px;
    flex-shrink: 0;
    margin: 0 3px 0 4px;
    background-color: #4c525e;
}

.canvas-toolbar .view {
    width: 48px;
    color: #cdcfd2;
}

.canvas-toolbar .override {
    color: #54628f;
}

.context-bar {
    display: flex;
    align-self: flex-start;
    flex-shrink: 0;
    height: 28px;
    margin-bottom: 4px;
    padding: 0 0 0 10px;
    border-bottom: 2px solid #70bafa;
    border-radius: 3px 3px 0 0;
    background-color: #3f4a5a;
    color: #a9acb2;
}

.context-bar button {
    gap: 2px;
    padding: 0 5px;
}

.context-bar button:last-child {
    padding: 0 0 0 13px;
}

.viewport {
    position: relative;
    flex: 1;
    min-height: 0;
    border-radius: 4px;
    background-color: #4d4d4d;
    overflow: hidden;
}

.viewport::after {
    content: "";
    position: absolute;
    inset: 0;
    border: 2px solid #70bafa99;
    border-radius: 4px;
    pointer-events: none;
}

.canvas {
    position: absolute;
    width: 100%;
    height: 100%;
    fill: none;
}

.frame {
    stroke: #5a5193;
}

.axis-x {
    stroke: #c43a50;
}

.axis-x.inside {
    stroke: #a34a91;
}

.axis-y {
    stroke: #74b31a;
}

.axis-y.inside {
    stroke: #7b9c78;
}

.anchors {
    fill: #8eef97;
    stroke: #4c6350;
    stroke-width: 1px;
    stroke-opacity: 0.5;
}

.selection {
    stroke: #cf8558;
    stroke-width: 2px;
}

.label-text {
    fill: #fff;
    font-family: "Open Sans", sans-serif;
    font-size: 7px;
    font-weight: 600;
}

.cross {
    stroke: #d0cccc;
    stroke-width: 4px;
    stroke-opacity: 0.7;
}

.cross.inner {
    stroke: #f06a6a;
    stroke-width: 2px;
}

.handles {
    fill: #ff5f5f;
    stroke: #fff;
}

.ruler {
    fill: #1d2229;
}

.ticks {
    stroke: #82868c;
}

.corner {
    fill: #7c8188;
}

.numbers {
    fill: #a6a9ad;
    font-size: 8px;
}

.zoom {
    position: absolute;
    left: 18px;
    top: 20px;
    display: flex;
    color: #f0f0f0;
}

.zoom button {
    width: 34px;
    height: 28px;
}

.zoom .zoom-value {
    width: 52px;
    text-shadow: 0 0 2px #222;
}

.v-scroll {
    position: absolute;
    top: 20px;
    bottom: 16px;
    right: 3px;
    width: 6px;
    border-radius: 3px;
    background-color: #5a5a5a;
}

.v-scroll i {
    position: absolute;
    top: 28%;
    width: 6px;
    height: 40%;
    border-radius: 3px;
    background-color: #8c8c8c;
}

.h-scroll {
    position: absolute;
    left: 19px;
    right: 16px;
    bottom: 3px;
    height: 6px;
    border-radius: 3px;
    background-color: #5a5a5a;
}

.h-scroll i {
    position: absolute;
    left: 32%;
    width: 36%;
    height: 6px;
    border-radius: 3px;
    background-color: #8c8c8c;
}

.bottom-panel {
    display: flex;
    align-items: center;
    gap: 18px;
    height: 40px;
    flex-shrink: 0;
    padding: 0 9px 0 11px;
    border-radius: 4px;
    background-color: #363d4a;
}

.version {
    display: flex;
    align-items: center;
    gap: 10px;
    margin-left: auto;
    color: #8d9198;
}

/* Inspector */
.inspector {
    flex: 1;
}

.inspector-toolbar {
    padding-left: 2px;
}

.inspector-toolbar .narrow {
    width: 18px;
    color: #73777e;
}

.inspector-toolbar .narrow + button {
    width: 42px;
}

.inspector-bar {
    display: flex;
    align-items: center;
    flex-shrink: 0;
    margin: 0 0 4px 4px;
}

.inspector-toolbar + .inspector-bar {
    margin-top: -2px;
}

.inspector-bar button {
    width: 38px;
    height: 28px;
}

.object {
    flex: 1;
    height: 28px;
    border-radius: 4px;
    background-color: #252b34;
}

.object select {
    padding: 0 24px 2px 28px;
}

.kind {
    position: absolute;
    left: 5px;
    top: 6px;
}

.properties {
    position: relative;
    flex: 1;
    min-height: 0;
    margin: 0 4px 4px;
    padding: 4px 16px 0 4px;
    border-radius: 4px;
    background-color: #21252d;
    overflow: hidden;
}

.properties h2 {
    display: flex;
    align-items: center;
    justify-content: center;
    gap: 6px;
    height: 23px;
    margin: 0;
    border-radius: 3px;
    background-color: #41454d;
    font-size: 14px;
    font-weight: 700;
}

.text-head {
    display: flex;
    align-items: center;
    justify-content: space-between;
    height: 27px;
    padding: 0 0 4px 8px;
    color: #989a9e;
}

.text-edit {
    display: flex;
    height: 108px;
    border-radius: 4px;
    background-color: #1d2229;
}

.text-edit textarea {
    flex: 1;
    min-width: 0;
    padding: 5px 7px;
    border-bottom: 2px solid #1c2128;
    border-radius: 4px 0 0 0;
    background-color: #252b34;
    resize: none;
}

.text-edit button {
    width: 30px;
}

.prop {
    display: flex;
    align-items: center;
    margin-bottom: 4px;
    padding-left: 8px;
}

.prop > label, .prop-name {
    width: 93px;
    flex-shrink: 0;
    padding-right: 4px;
    color: #989a9e;
    white-space: nowrap;
    overflow: hidden;
    text-overflow: ellipsis;
}

.prop .dropdown {
    flex: 1;
    height: 30px;
    border-radius: 4px;
    background-color: #1d2229;
}

.prop select {
    padding: 0 20px 0 7px;
}

.prop.plain {
    margin-top: 4px;
}

.prop.plain .dropdown {
    background: none;
}

.plain .caret {
    right: 7px;
}

.flags {
    align-items: flex-start;
}

.prop-name {
    padding-top: 3px;
}

.checks {
    flex: 1;
    min-width: 0;
    padding: 0 4px 30px 5px;
    border-radius: 4px 4px 0 0;
    background-color: #1d2229;
}

.checks label {
    display: flex;
    align-items: center;
    gap: 9px;
    height: 30px;
    margin-top: -2px;
    margin-bottom: 2px;
    white-space: nowrap;
}

.checks input {
    position: relative;
    width: 14px;
    height: 14px;
    flex-shrink: 0;
    border-radius: 2px;
    background-color: #45484d;
}

.checks input:checked {
    background-color: #70bafa;
}

.checks input:checked::after {
    content: "";
    position: absolute;
    left: 3px;
    top: 3px;
    width: 9px;
    height: 5px;
    border-left: 2px solid #fff;
    border-bottom: 2px solid #fff;
    transform: rotate(-45deg);
}

.checks input:checked + span {
    color: #70bafa;
}

.properties .scroll i {
    height: 41%;
}
```
